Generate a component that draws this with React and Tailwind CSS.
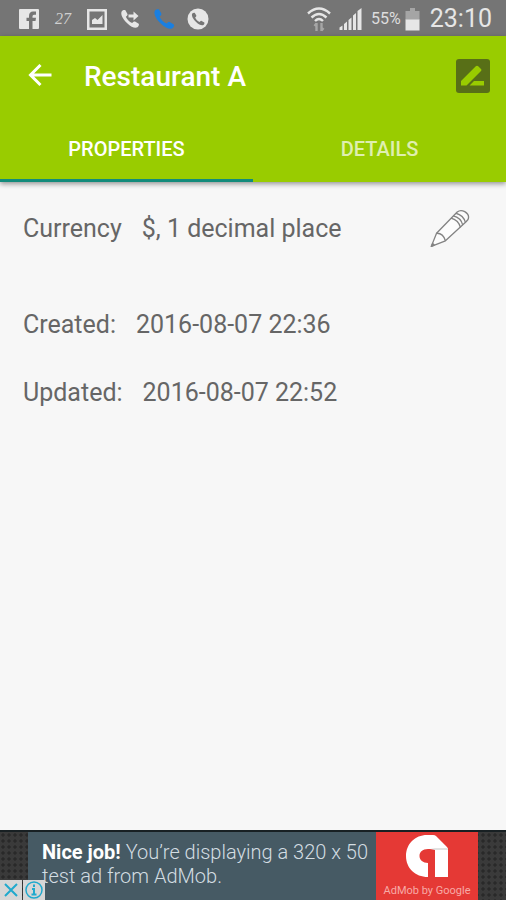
const details = [
  { label: 'Created:', value: '2016-08-07 22:36' },
  { label: 'Updated:', value: '2016-08-07 22:52' },
]

export default function App() {
  return (
    <div className="flex min-h-screen flex-col bg-[#f7f7f7] font-['Roboto',sans-serif] text-[#666666]">
      <StatusBar />
      <Header />
      <main className="flex-1 px-[23px] pt-7">
        <div className="flex h-9 items-center justify-between pr-[13px]">
          <Property label="Currency" value="$, 1 decimal place" />
          <button type="button" aria-label="Edit currency">
            <PencilIcon />
          </button>
        </div>
        <dl className="mt-15 flex flex-col gap-8">
          {details.map((item) => (
            <div key={item.label} className="flex h-9 items-center gap-5 pt-0.5 text-[25px]">
              <dt>{item.label}</dt>
              <dd>{item.value}</dd>
            </div>
          ))}
        </dl>
      </main>
      <AdBanner />
    </div>
  )
}

function Property({ label, value }) {
  return (
    <p className="flex gap-5 pt-0.5 text-[25px]">
      <span>{label}</span>
      <span>{value}</span>
    </p>
  )
}

function StatusBar() {
  return (
    <div className="flex h-9 items-center justify-between bg-[#757575] pt-0.5 pr-3.5 pl-[19px] text-[#e6e6e6]">
      <div className="flex items-center gap-3">
        <FacebookIcon />
        <span className="w-6 text-center font-['Liberation_Serif',serif] text-base text-[#d0d0d0] italic">27</span>
        <PictureIcon />
        <CallForwardIcon />
        <svg viewBox="0 0 22 22" className="h-[22px] w-[22px]" fill="#1a7fe0">
          <path d={handset} />
        </svg>
        <svg viewBox="0 0 22 22" className="h-[22px] w-[22px]">
          <circle cx="11" cy="11" r="10.5" fill="currentColor" />
          <path d={handset} fill="#757575" transform="translate(4 4) scale(.64)" />
        </svg>
      </div>
      <div className="flex items-center gap-1">
        <WifiIcon />
        <SignalIcon />
        <span className="ml-1 text-base text-[#dddddd]">55%</span>
        <BatteryIcon />
        <span className="ml-1.5 text-[25px]">23:10</span>
      </div>
    </div>
  )
}

function Header() {
  return (
    <header className="z-10 bg-[#99cc00] text-white shadow-[0_2px_5px_rgba(0,0,0,0.4)]">
      <div className="flex h-20 items-center pr-4 pl-7">
        <button type="button" aria-label="Back">
          <svg viewBox="0 0 24 24" className="h-6 w-6" fill="none" stroke="currentColor" strokeWidth="3">
            <path d="M23.5 11H3M12.5 1L2.5 11L12.5 21" />
          </svg>
        </button>
        <h1 className="ml-8 flex-1 pt-0.5 text-[28px] font-medium">Restaurant A</h1>
        <button type="button" aria-label="Edit restaurant">
          <svg viewBox="0 0 34 34" className="h-[34px] w-[34px]">
            <rect width="34" height="34" rx="3" fill="#586f17" />
            <path d="M5 22L19.5 7.5Q21 6 22.5 7.5L25 10Q26 11 25 12L10.5 26.5H5Z M18 22H28V26.5H13.5Z" fill="#99cc00" />
          </svg>
        </button>
      </div>
      <div role="tablist" className="grid h-[66px] grid-cols-2 text-[20px] font-medium">
        <button type="button" role="tab" aria-selected="true" className="border-b-3 border-[#138b7b] pt-0.5">
          PROPERTIES
        </button>
        <button type="button" role="tab" aria-selected="false" className="border-b-3 border-transparent pt-0.5 text-white/70">
          DETAILS
        </button>
      </div>
    </header>
  )
}

function AdBanner() {
  return (
    <aside className="relative flex h-[70px] justify-center border-t-2 border-[#182023] bg-[#3a3a3a] bg-[radial-gradient(#292929_30%,transparent_50%)] bg-size-[6px_6px]">
      <a href="#ad" className="flex w-[450px]">
        <span className="flex-1 bg-[#465a64] pt-2 pl-3.5 text-[20px] leading-6 text-[#d3dde2]">
          <span className="block whitespace-nowrap">
            <strong className="font-bold text-white">Nice job!</strong>{' '}
            <span className="font-light">You’re displaying a 320 x 50</span>
          </span>
          <span className="block font-light">test ad from AdMob.</span>
        </span>
        <span className="flex w-[102px] flex-col items-center bg-[#e53935] pt-[3px]">
          <AdMobLogo />
          <span className="mt-1.5 text-[11px] leading-4 whitespace-nowrap text-[#f7aaa7]">AdMob by Google</span>
        </span>
      </a>
      <div className="absolute bottom-0 left-0 flex gap-px text-[#20a9cd]">
        <button type="button" aria-label="Close ad" className="bg-[#d6d6d6]">
          <svg viewBox="0 0 22 20" className="h-5 w-[22px]" fill="none" stroke="currentColor" strokeWidth="2">
            <path d="M5 4L17 16M17 4L5 16" />
          </svg>
        </button>
        <button type="button" aria-label="About this ad" className="bg-[#d6d6d6]">
          <svg viewBox="0 0 22 20" className="h-5 w-[22px]" fill="none" stroke="currentColor">
            <circle cx="11" cy="10" r="8" strokeWidth="1.5" />
            <path d="M11 4.5V7M9 9H11V14.5M8.5 14.5H13.5" strokeWidth="2" />
          </svg>
        </button>
      </div>
    </aside>
  )
}

const handset =
  'M2 2.5C3 1.3 5 .8 6 1.5L8.3 5.6Q8.7 6.5 7.8 7.4L6.5 8.6C8 11.8 10.3 14.1 13.5 15.6L15 14.2Q15.7 13.5 16.7 14L20.8 16.4C21.5 17.3 20.7 19.4 19.4 20.3C17 21.8 12.5 20.2 8 15.8C2.5 10.5 .3 5.3 2 2.5Z'

function FacebookIcon() {
  return (
    <svg viewBox="0 0 20 20" className="h-5 w-5">
      <rect width="20" height="20" rx="1" fill="currentColor" />
      <path d="M10 20V12H7.5V8.7H10V7C10 4 11.5 2.5 14 2.5H17V5.7H15Q13.5 5.7 13.5 7.2V8.7H17L16.5 12H13.5V20Z" fill="#757575" />
    </svg>
  )
}

function PictureIcon() {
  return (
    <svg viewBox="0 0 20 21" className="h-[21px] w-5">
      <rect x="1.25" y="1.25" width="17.5" height="18.5" fill="none" stroke="currentColor" strokeWidth="2.5" />
      <path d="M5 15V11L8 9L10.5 11L15.5 6V15Z" fill="currentColor" />
    </svg>
  )
}

function CallForwardIcon() {
  return (
    <svg viewBox="0 0 22 22" className="h-[22px] w-[22px]" fill="currentColor">
      <path d={handset} transform="translate(1 1) scale(.9)" />
      <path d="M9.5 6.5H14.5V3.5L19.5 8L14.5 12.5V9.5H9.5Z" />
    </svg>
  )
}

function WifiIcon() {
  return (
    <svg viewBox="0 0 24 26" className="h-[26px] w-6" fill="none" stroke="currentColor" strokeWidth="2.4">
      <path d="M1 7.5Q12 -2.5 23 7.5M4.5 11.5Q12 4.5 19.5 11.5M8 15Q12 11 16 15" />
      <path d="M9.5 25V17M14.5 17V25M7.5 20L9.5 17.5M16.5 22L14.5 24.5" stroke="#a6a6a6" strokeWidth="2.4" />
    </svg>
  )
}

function SignalIcon() {
  return (
    <svg viewBox="0 0 28 24" className="h-6 w-7" fill="currentColor">
      <path d="M4.5 20.5L7.5 18.5V23H4.5ZM9 17L12 14.5V23H9ZM13.5 13L16.5 10.5V23H13.5ZM18 8.5L21 6V23H18ZM22.5 4L26.5 1V23H22.5Z" />
    </svg>
  )
}

function BatteryIcon() {
  return (
    <svg viewBox="0 0 15 23" className="h-[23px] w-[15px]">
      <path d="M5 0H10V3H14.5V12H.5V3H5Z" fill="#a5a5a5" />
      <path d="M.5 11.5H14.5V22.5H.5Z" fill="currentColor" />
    </svg>
  )
}

function PencilIcon() {
  return (
    <svg viewBox="62 50 122 117" className="h-[39px] w-10" fill="#fcfcfc" stroke="#838383" strokeWidth="4" strokeLinejoin="round">
      <path d="M66 163L82 123L145 58Q155 50 168 57Q184 67 178 81L172 88L109 146Z" />
      <path d="M82 123Q102 122 109 146M126 77Q148 82 155 105M133 70Q156 75 162 98M141 62Q164 68 170 90" fill="none" />
      <path d="M66 163L70 154L75 159Z" fill="#838383" />
    </svg>
  )
}

function AdMobLogo() {
  return (
    <svg viewBox="0 0 42 42" className="h-[42px] w-[42px]" fill="#ffffff">
      <path d="M22 42C9 42 0 33 0 21S9 0 21 0H27Q29 0 30 1L41 12Q42 13 42 15V42H29V14H22C16.5 14 13.5 17 13.5 21S17 28 22 28Z" />
      <path d="M24 14L29 13H42V15H29Z" fill="#e2e2e2" />
    </svg>
  )
}
